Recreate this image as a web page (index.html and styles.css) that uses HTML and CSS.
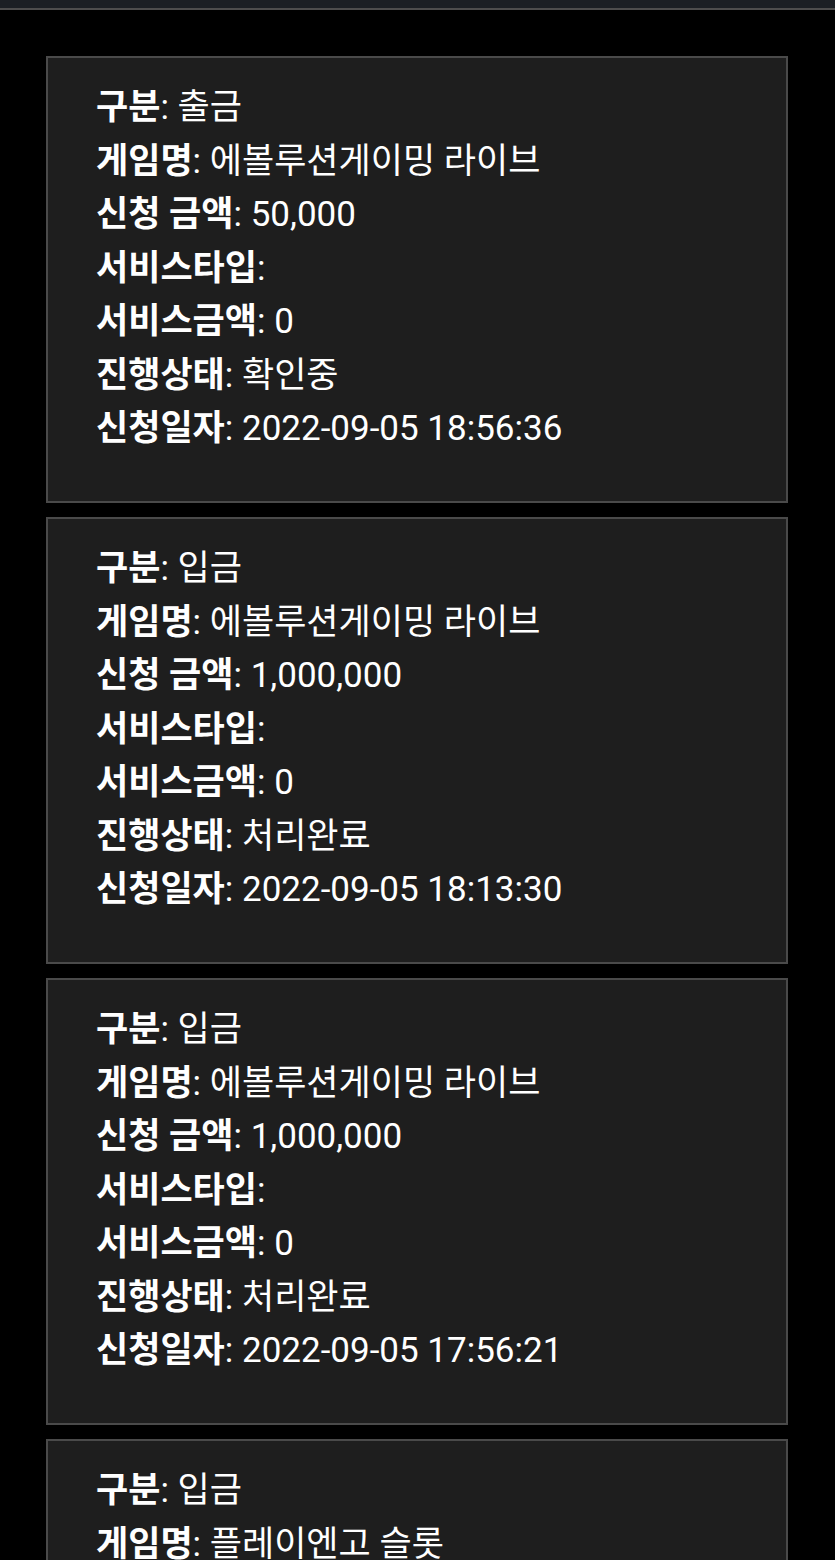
FILE: index.html
```html
<!DOCTYPE html>
<html lang="ko">
<head>
  <meta charset="UTF-8" />
  <title>신청내역</title>
  <link rel="stylesheet" href="styles.css">
</head>
<body>

  <div class="topbar"></div>

  <div class="list">
    <div class="card">
      <p><b>구분</b>: 출금</p>
      <p><b>게임명</b>: 에볼루션게이밍 라이브</p>
      <p><b>신청 금액</b>: 50,000</p>
      <p><b>서비스타입</b>: </p>
      <p><b>서비스금액</b>: 0</p>
      <p><b>진행상태</b>: 확인중</p>
      <p><b>신청일자</b>: 2022-09-05 18:56:36</p>
    </div>

    <div class="card">
      <p><b>구분</b>: 입금</p>
      <p><b>게임명</b>: 에볼루션게이밍 라이브</p>
      <p><b>신청 금액</b>: 1,000,000</p>
      <p><b>서비스타입</b>: </p>
      <p><b>서비스금액</b>: 0</p>
      <p><b>진행상태</b>: 처리완료</p>
      <p><b>신청일자</b>: 2022-09-05 18:13:30</p>
    </div>

    <div class="card">
      <p><b>구분</b>: 입금</p>
      <p><b>게임명</b>: 에볼루션게이밍 라이브</p>
      <p><b>신청 금액</b>: 1,000,000</p>
      <p><b>서비스타입</b>: </p>
      <p><b>서비스금액</b>: 0</p>
      <p><b>진행상태</b>: 처리완료</p>
      <p><b>신청일자</b>: 2022-09-05 17:56:21</p>
    </div>

    <div class="card">
      <p><b>구분</b>: 입금</p>
      <p><b>게임명</b>: 플레이엔고 슬롯</p>
      <p><b>신청 금액</b>: 100,000</p>
      <p><b>서비스타입</b>: </p>
      <p><b>서비스금액</b>: 0</p>
      <p><b>진행상태</b>: 처리완료</p>
      <p><b>신청일자</b>: 2022-09-05 17:40:12</p>
    </div>
  </div>

</body>
</html>
```

FILE: styles.css
```css
body {
  margin: 0;
  background-color: #000;
  color: #fff;
  font-family: Roboto, 'Noto Sans CJK KR', sans-serif;
  font-size: 35px;
}

.topbar {
  height: 8px;
  background-color: #1b1f24;
  border-bottom: 2px solid #4d4d4d;
}

.list {
  display: flex;
  flex-direction: column;
  gap: 14px;
  padding: 46px 47px 0 46px;
}

.card {
  background-color: #1e1e1e;
  border: 2px solid #4a4a4a;
  padding: 23px 20px 45.5px 48px;
}

.card p {
  margin: 0;
  line-height: 53.5px;
}

.card b {
  font-weight: bold;
}
```
